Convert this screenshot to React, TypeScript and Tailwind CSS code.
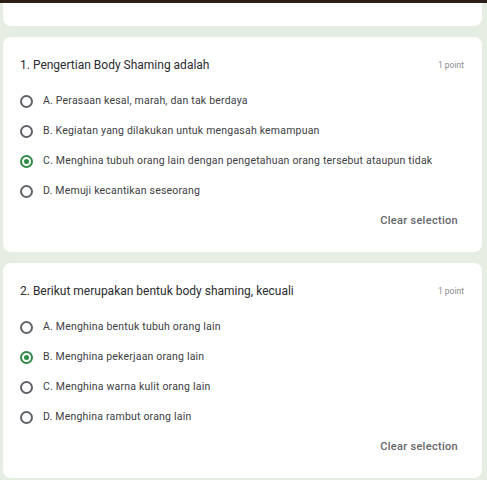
import React from "react";

type Q = {
  title: string;
  options: string[];
  selected: number;
};

const questions: Q[] = [
  {
    title: "1. Pengertian Body Shaming adalah",
    options: [
      "A. Perasaan kesal, marah, dan tak berdaya",
      "B. Kegiatan yang dilakukan untuk mengasah kemampuan",
      "C. Menghina tubuh orang lain dengan pengetahuan orang tersebut ataupun tidak",
      "D. Memuji kecantikan seseorang",
    ],
    selected: 2,
  },
  {
    title: "2. Berikut merupakan bentuk body shaming, kecuali",
    options: [
      "A. Menghina bentuk tubuh orang lain",
      "B. Menghina pekerjaan orang lain",
      "C. Menghina warna kulit orang lain",
      "D. Menghina rambut orang lain",
    ],
    selected: 1,
  },
];

const Radio = ({ checked }: { checked: boolean }) =>
  checked ? (
    <span className="flex h-[13px] w-[13px] shrink-0 items-center justify-center rounded-full border-[2px] border-[#2e8b45]">
      <span className="h-[5px] w-[5px] rounded-full bg-[#2e8b45]" />
    </span>
  ) : (
    <span className="h-[13px] w-[13px] shrink-0 rounded-full border-[2px] border-[#5f6368]" />
  );

const QuestionCard = ({ q }: { q: Q }) => (
  <div className="ml-[3px] mr-[5px] rounded-[8px] bg-white pt-[20px] pb-[16px]">
    <div className="flex h-[16px] items-center justify-between pl-[17px] pr-[18px]">
      <span className="text-[12px] text-[#2b2c2f]">{q.title}</span>
      <span className="text-[8.5px] text-[#8a8d91]">1 point</span>
    </div>
    <div className="mt-[13px] flex flex-col">
      {q.options.map((opt, i) => (
        <div key={i} className="flex h-[30px] items-center pl-[17px]">
          <Radio checked={i === q.selected} />
          <span className="ml-[10px] text-[10.5px] tracking-[0.2px] text-[#3c4043]">{opt}</span>
        </div>
      ))}
    </div>
    <div className="flex h-[30px] items-center justify-end pr-[24px]">
      <span className="text-[11px] font-medium tracking-[0.3px] text-[#63666a]">Clear selection</span>
    </div>
  </div>
);

export default function App() {
  return (
    <div
      className="h-[480px] w-[487px] overflow-hidden bg-[#e6eee4]"
      style={{ fontFamily: "Roboto, 'Liberation Sans', sans-serif" }}
    >
      <div className="h-[3px] bg-[#2d1e18]" />
      <div className="ml-[3px] mr-[5px] h-[23px] rounded-b-[8px] bg-white" />
      <div className="mt-[11px] flex flex-col gap-[11px]">
        {questions.map((q, i) => (
          <QuestionCard key={i} q={q} />
        ))}
      </div>
    </div>
  );
}
